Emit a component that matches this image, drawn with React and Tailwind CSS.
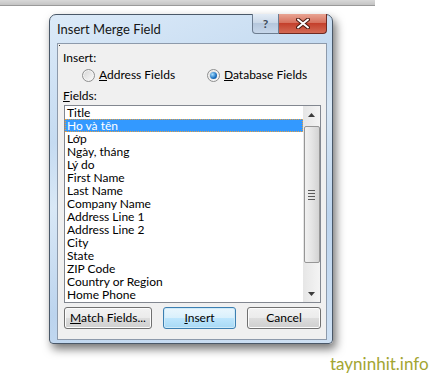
import React from 'react';

const fields = [
  "Title",
  "Ho và tên",
  "Lớp",
  "Ngày, tháng",
  "Lý do",
  "First Name",
  "Last Name",
  "Company Name",
  "Address Line 1",
  "Address Line 2",
  "City",
  "State",
  "ZIP Code",
  "Country or Region",
  "Home Phone",
];

function Radio({ checked }) {
  return (
    <span className="w-[13px] h-[13px] shrink-0 rounded-full border border-[#8e8f8f] bg-[linear-gradient(135deg,#d4d4d4,#fcfcfc)] flex items-center justify-center shadow-[inset_0_0_0_1px_#f4f4f4]">
      {checked && (
        <span className="w-[7px] h-[7px] rounded-full bg-[radial-gradient(circle_at_35%_35%,#a8e0ff,#1a6fbf_60%,#0b4a8c)]" />
      )}
    </span>
  );
}

function Button({ children, primary, width }) {
  return (
    <button
      className={
        (primary
          ? "h-[22px] rounded-[3px] border border-[#3c7fb1] bg-[linear-gradient(#eaf6fd,#d9f0fc_50%,#bee6fd_50%,#a7d9f5)] shadow-[inset_0_0_0_1px_#cfeaf8]"
          : "h-[22px] rounded-[3px] border border-[#707070] bg-[linear-gradient(#f2f2f2,#ebebeb_50%,#dddddd_50%,#cfcfcf)] shadow-[inset_0_0_0_1px_#fcfcfc]") +
        " text-[12px] leading-[14px] text-black " + width
      }
    >
      {children}
    </button>
  );
}

export default function App() {
  return (
    <div className="w-[436px] h-[374px] bg-white font-['Lato',sans-serif] overflow-hidden">
      {/* top bar from the page behind */}
      <div className="w-[375px] h-[6px] bg-[linear-gradient(#d8d8d8,#c4c4c4)] border-b border-[#9a9a9a]" />

      <div className="ml-[49px] mt-[8px] w-[284px] h-[330px] rounded-t-[7px] rounded-b-[4px] border border-[#4a5868] bg-[linear-gradient(160deg,#dceaf8_0%,#c5dbf1_30%,#d9e8f6_45%,#bcd4ee_70%,#cfe1f4_100%)] shadow-[3px_5px_10px_rgba(0,0,0,0.55)] flex flex-col">
        {/* title bar */}
        <div className="h-[28px] flex items-start justify-between">
          <span className="pl-[7px] pt-[6px] text-[13px] leading-[16px] text-[#151515]">
            Insert Merge Field
          </span>
          <div className="flex mr-[5px] -mt-px">
            <div className="w-[27px] h-[20px] rounded-bl-[4px] border border-[#6d7d90] border-t-0 bg-[linear-gradient(#e3ecf6,#c8d6e6_50%,#b5c7dc_50%,#c7d7ea)] flex items-center justify-center text-[12px] font-bold text-[#3d4a5a]">
              ?
            </div>
            <div className="w-[48px] h-[20px] rounded-br-[4px] border border-[#6e2a22] border-t-0 border-l-0 bg-[linear-gradient(#e8a493,#d7725f_45%,#c4402c_50%,#d36a55)] flex items-center justify-center">
              <svg width="14" height="11" viewBox="0 0 14 11">
                <path d="M2 1.5 L12 9.5 M12 1.5 L2 9.5" stroke="#4a1a12" strokeWidth="4" strokeLinecap="round" />
                <path d="M2 1.5 L12 9.5 M12 1.5 L2 9.5" stroke="#ffffff" strokeWidth="2" strokeLinecap="round" />
              </svg>
            </div>
          </div>
        </div>

        {/* client area */}
        <div className="ml-[7px] mr-[5px] mb-[3px] flex-1 border border-[#8d9aab] bg-[#f0f0f0] relative px-[5px] text-[12px] text-black">
          <span className="absolute left-[1px] top-[1px] w-px h-px bg-[#333]" />
          <div className="pt-[6px] leading-[15px]">Insert:</div>
          <div className="flex items-center h-[18px] mt-[1px]">
            <div className="flex items-center gap-[4px] ml-[19px] w-[125px]">
              <Radio />
              <span className="whitespace-nowrap"><span className="underline">A</span>ddress Fields</span>
            </div>
            <div className="flex items-center gap-[4px]">
              <Radio checked />
              <span className="whitespace-nowrap"><span className="underline">D</span>atabase Fields</span>
            </div>
          </div>
          <div className="mt-[4px] leading-[16px]"><span className="underline">F</span>ields:</div>
          <div className="mt-[1px] ml-px w-[257px] h-[198px] border border-[#828790] bg-white flex">
            <div className="flex-1">
              {fields.map((f, i) => (
                <div
                  key={f}
                  className={
                    i === 1
                      ? "h-[13px] leading-[13px] pl-[2px] bg-[#3399ff] text-white outline outline-1 outline-dotted outline-[#e8a040] -outline-offset-1 whitespace-nowrap"
                      : "h-[13px] leading-[13px] pl-[2px] whitespace-nowrap"
                  }
                >
                  {f}
                </div>
              ))}
            </div>
            <div className="w-[17px] bg-[linear-gradient(90deg,#e6e6e6,#f4f4f4)] flex flex-col items-center">
              <div className="h-[17px] flex items-center justify-center">
                <svg width="7" height="4" viewBox="0 0 7 4"><path d="M0 4 L3.5 0 L7 4 Z" fill="#3c3c3c" /></svg>
              </div>
              <div className="w-[16px] mt-[3px] h-[137px] rounded-[2px] border border-[#969696] bg-[linear-gradient(90deg,#f1f1f1,#e4e4e4_50%,#d3d3d3)] flex items-center justify-center">
                <div className="flex flex-col gap-[2px]">
                  <span className="w-[7px] h-px bg-[#5a5a5a]" />
                  <span className="w-[7px] h-px bg-[#5a5a5a]" />
                  <span className="w-[7px] h-px bg-[#5a5a5a]" />
                  <span className="w-[7px] h-px bg-[#5a5a5a]" />
                </div>
              </div>
              <div className="flex-1" />
              <div className="h-[17px] flex items-center justify-center">
                <svg width="7" height="4" viewBox="0 0 7 4"><path d="M0 0 L7 0 L3.5 4 Z" fill="#3c3c3c" /></svg>
              </div>
            </div>
          </div>
          <div className="mt-[4px] flex gap-[11px] ml-px">
            <Button width="w-[88px]"><span className="underline">M</span>atch Fields...</Button>
            <Button primary width="w-[73px]"><span className="underline">I</span>nsert</Button>
            <Button width="w-[74px]">Cancel</Button>
          </div>
        </div>
      </div>

      <div className="pl-[330px] mt-[10px] text-[17px] leading-[20px] text-[#a3a532] font-['Lato',sans-serif]">
        tayninhit.info
      </div>
    </div>
  );
}
